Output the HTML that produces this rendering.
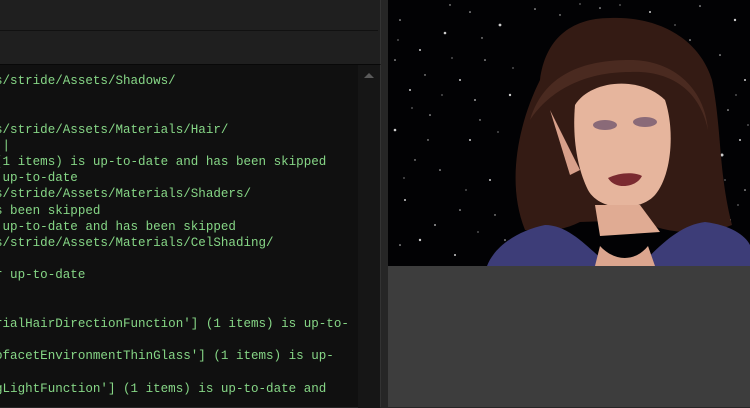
<!DOCTYPE html>
<html><head><meta charset="utf-8"><style>
*{margin:0;padding:0;box-sizing:border-box}
body{width:750px;height:407px;overflow:hidden;background:#262626;position:relative;font-family:"Liberation Mono",monospace}
.top{position:absolute;left:0;top:0;width:381px;height:64px;background:#1f1f1f;border-right:1px solid #333}
.top .ln{position:absolute;left:0;top:30px;width:378px;height:1px;background:#111}
.term{position:absolute;left:0;top:64px;width:381px;height:343px;background:#101010;border-right:1px solid #333;border-top:1px solid #080808}
.sb{position:absolute;left:358px;top:0;width:22px;height:343px;background:#161616}
.arrow{position:absolute;left:364px;top:8px;width:0;height:0;border-left:5px solid transparent;border-right:5px solid transparent;border-bottom:5px solid #5a5a5a;z-index:2}
pre{position:absolute;left:-5px;top:8px;font-family:"Liberation Mono",monospace;font-size:12.55px;line-height:16.2px;color:#86d686;white-space:pre}
.img{position:absolute;left:388px;top:0;width:362px;height:266px;background:#000;overflow:hidden}
.below{position:absolute;left:388px;top:266px;width:362px;height:141px;background:#3d3d3d}
</style></head><body>
<div class="top"><div class="ln"></div></div>
<div class="term"><div class="sb"></div><div class="arrow"></div>
<pre>s/stride/Assets/Shadows/


s/stride/Assets/Materials/Hair/
 |
(1 items) is up-to-date and has been skipped
 up-to-date
s/stride/Assets/Materials/Shaders/
s been skipped
 up-to-date and has been skipped
s/stride/Assets/Materials/CelShading/

r up-to-date

:
rialHairDirectionFunction'] (1 items) is up-to-

ofacetEnvironmentThinGlass'] (1 items) is up-

gLightFunction'] (1 items) is up-to-date and</pre></div>
<div class="img">
<svg width="362" height="266" viewBox="388 0 362 266" xmlns="http://www.w3.org/2000/svg">
<rect x="388" y="0" width="362" height="266" fill="#020204"/>
<g fill="#ccc">
<circle cx="400" cy="20" r="0.8"/><circle cx="420" cy="50" r="1"/><circle cx="445" cy="33" r="1.3"/><circle cx="470" cy="12" r="0.8"/><circle cx="500" cy="25" r="1.4"/><circle cx="535" cy="9" r="0.8"/><circle cx="410" cy="90" r="1"/><circle cx="395" cy="130" r="1.3"/><circle cx="430" cy="115" r="0.8"/><circle cx="460" cy="80" r="1"/><circle cx="485" cy="60" r="0.8"/><circle cx="510" cy="95" r="1.2"/><circle cx="470" cy="140" r="1"/><circle cx="440" cy="170" r="0.8"/><circle cx="405" cy="200" r="1"/><circle cx="420" cy="240" r="1.2"/><circle cx="460" cy="210" r="0.8"/><circle cx="490" cy="180" r="1"/><circle cx="505" cy="240" r="0.8"/><circle cx="455" cy="255" r="1"/><circle cx="480" cy="120" r="0.7"/><circle cx="520" cy="150" r="1"/><circle cx="395" cy="60" r="0.8"/><circle cx="415" cy="160" r="0.7"/><circle cx="435" cy="225" r="0.9"/><circle cx="495" cy="215" r="0.7"/><circle cx="600" cy="8" r="0.8"/><circle cx="650" cy="12" r="1"/><circle cx="700" cy="6" r="0.8"/><circle cx="735" cy="20" r="1.2"/><circle cx="720" cy="55" r="0.8"/><circle cx="745" cy="80" r="1"/><circle cx="728" cy="110" r="0.8"/><circle cx="740" cy="140" r="1"/><circle cx="722" cy="155" r="1.5"/><circle cx="745" cy="190" r="0.8"/><circle cx="730" cy="220" r="1"/><circle cx="742" cy="245" r="0.8"/><circle cx="690" cy="40" r="0.8"/><circle cx="560" cy="15" r="0.7"/><circle cx="450" cy="5" r="0.7"/><circle cx="425" cy="75" r="0.7"/><circle cx="475" cy="100" r="0.9"/><circle cx="400" cy="245" r="0.8"/>
<circle cx="398" cy="40" r="0.6"/><circle cx="412" cy="108" r="0.6"/><circle cx="428" cy="140" r="0.7"/><circle cx="452" cy="58" r="0.6"/><circle cx="466" cy="190" r="0.6"/><circle cx="482" cy="38" r="0.7"/><circle cx="498" cy="132" r="0.6"/><circle cx="513" cy="68" r="0.6"/><circle cx="442" cy="95" r="0.6"/><circle cx="404" cy="178" r="0.6"/><circle cx="478" cy="232" r="0.6"/><circle cx="518" cy="200" r="0.6"/><circle cx="736" cy="95" r="0.6"/><circle cx="748" cy="125" r="0.6"/><circle cx="725" cy="180" r="0.6"/><circle cx="738" cy="205" r="0.6"/><circle cx="620" cy="5" r="0.6"/><circle cx="675" cy="25" r="0.6"/><circle cx="580" cy="4" r="0.6"/></g>
<path d="M525 230 C505 180 520 120 540 80 C545 40 570 18 610 18 C660 16 700 40 712 80 C722 130 718 170 732 225 C700 238 660 232 640 220 L580 222 C560 232 540 232 525 230Z" fill="#341b14"/>
<path d="M530 120 C545 70 590 60 630 60 C675 60 705 90 708 130 C700 90 670 70 630 72 C585 72 550 90 530 120Z" fill="#4a2a20"/>
<path d="M575 105 C590 80 640 75 665 100 C675 130 672 175 655 195 C640 212 600 212 588 190 C578 170 572 140 575 105Z" fill="#e6b59d"/>
<path d="M550 110 L580 170 L570 175Z" fill="#d8a08a"/>
<ellipse cx="605" cy="125" rx="12" ry="5" fill="#8a6a78"/><ellipse cx="645" cy="122" rx="12" ry="5" fill="#8a6a78"/>
<path d="M608 178 C620 172 635 172 642 176 C636 188 615 190 608 178Z" fill="#7a2a30"/>
<path d="M595 205 L640 205 L660 232 L600 236Z" fill="#e0ab93"/>
<path d="M487 266 C495 245 520 230 545 225 C570 225 590 250 610 266Z M640 266 C660 245 680 225 705 222 C730 225 745 235 750 245 L750 266Z" fill="#3d3d78"/>
<path d="M600 246 C615 262 635 262 648 246 L655 266 L595 266Z" fill="#dba58e"/>
</svg></div>
<div class="below"></div>
</body></html>
